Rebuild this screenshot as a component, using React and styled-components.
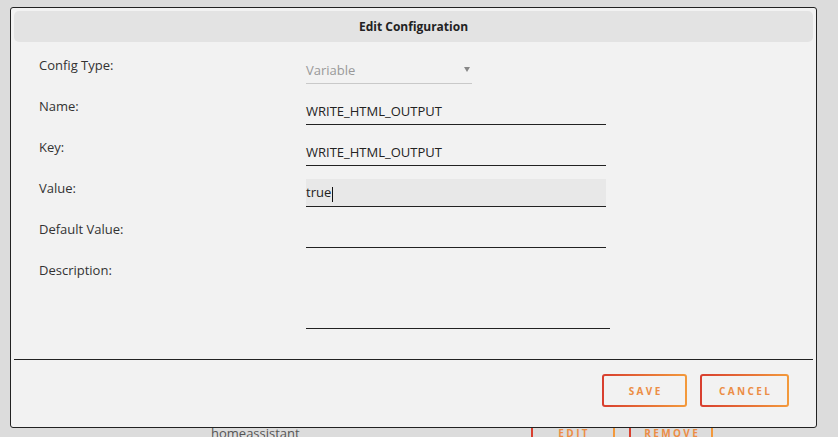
import React from "react";
import styled, { createGlobalStyle } from "styled-components";

const Global = createGlobalStyle`
  html, body { margin: 0; padding: 0; }
  body {
    background: #dcdcdc;
    font-family: "Open Sans", "Noto Sans", sans-serif;
    color: #222;
  }
  * { box-sizing: border-box; }
`;

const Page = styled.div`
  position: relative;
  width: 838px;
  height: 437px;
  overflow: hidden;
  background: #dcdcdc;
`;

const ListRow = styled.div`
  display: flex;
  align-items: center;
  padding: 416px 0 0 211px;
`;

const ListName = styled.div`
  width: 320px;
  font-size: 13px;
  color: #555;
`;

const ListActions = styled.div`
  display: flex;
  gap: 14px;
`;

const GradientButton = styled.button`
  width: ${(p) => p.$w}px;
  height: ${(p) => p.$h || 33}px;
  border: 2px solid transparent;
  border-radius: 3px;
  background: linear-gradient(${(p) => p.$bg || "#f2f2f2"}, ${(p) => p.$bg || "#f2f2f2"}) padding-box,
    linear-gradient(90deg, #d83e2f, #f39a3c) border-box;
  color: #ec8d45;
  font-family: "Open Sans", "Noto Sans", sans-serif;
  font-weight: 700;
  font-size: 10px;
  letter-spacing: 2.4px;
  padding: 0 0 0 2.4px;
  display: flex;
  align-items: center;
  justify-content: center;
  cursor: pointer;
`;

const Dialog = styled.div`
  position: absolute;
  top: 7px;
  left: 10px;
  width: 807px;
  height: 421px;
  background: #f2f2f2;
  border: 1px solid #222;
  border-radius: 3px;
  display: flex;
  flex-direction: column;
  padding: 3px 3px 0;
`;

const Header = styled.div`
  height: 31px;
  background: #e3e3e3;
  border-radius: 5px;
  display: flex;
  align-items: center;
  justify-content: center;
  font-size: 12px;
  font-weight: 700;
  color: #222;
`;

const Form = styled.div`
  display: grid;
  grid-template-columns: 267px auto;
  row-gap: 13px;
  padding: 14px 0 0 25px;
`;

const Label = styled.div`
  font-size: 13px;
  line-height: 19px;
  color: #333;
`;

const Field = styled.div`
  width: ${(p) => p.$w || 300}px;
  height: ${(p) => p.$h || 28}px;
  border-bottom: 1px solid ${(p) => (p.$light ? "#c9c9c9" : "#222")};
  background: ${(p) => (p.$active ? "#e8e8e8" : "transparent")};
  display: flex;
  align-items: center;
  justify-content: space-between;
  font-size: 13px;
  color: ${(p) => (p.$muted ? "#999" : "#222")};
`;

const Caret = styled.span`
  display: inline-block;
  width: 1px;
  height: 15px;
  background: #111;
  vertical-align: middle;
  margin-left: 1px;
`;

const Arrow = styled.span`
  width: 0;
  height: 0;
  border-left: 3px solid transparent;
  border-right: 3px solid transparent;
  border-top: 5px solid #888;
  margin-right: 2px;
`;

const Separator = styled.div`
  height: 1px;
  background: #222;
  margin-top: 30px;
`;

const Footer = styled.div`
  display: flex;
  justify-content: flex-end;
  gap: 13px;
  padding: 14px 24px 0 0;
`;

export default function App() {
  return (
    <>
      <Global />
      <Page>
        <ListRow>
          <ListName>homeassistant</ListName>
          <ListActions>
            <GradientButton $w={84} $h={34} $bg="#dcdcdc">EDIT</GradientButton>
            <GradientButton $w={84} $h={34} $bg="#dcdcdc">REMOVE</GradientButton>
          </ListActions>
        </ListRow>
        <Dialog>
          <Header>Edit Configuration</Header>
          <Form>
            <Label>Config Type:</Label>
            <Field $w={166} $light $muted>
              <span>Variable</span>
              <Arrow />
            </Field>
            <Label>Name:</Label>
            <Field>WRITE_HTML_OUTPUT</Field>
            <Label>Key:</Label>
            <Field>WRITE_HTML_OUTPUT</Field>
            <Label>Value:</Label>
            <Field $active>
              <span>
                true
                <Caret />
              </span>
            </Field>
            <Label>Default Value:</Label>
            <Field />
            <Label>Description:</Label>
            <Field $w={304} $h={68} />
          </Form>
          <Separator />
          <Footer>
            <GradientButton $w={85}>SAVE</GradientButton>
            <GradientButton $w={89}>CANCEL</GradientButton>
          </Footer>
        </Dialog>
      </Page>
    </>
  );
}
